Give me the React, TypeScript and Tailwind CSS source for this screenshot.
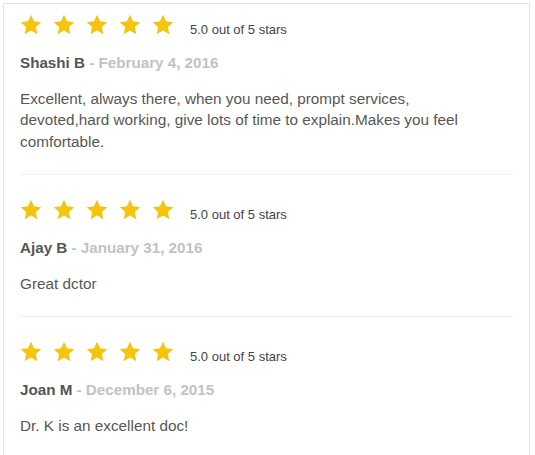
import React from "react";

const reviews = [
  {
    name: "Shashi B",
    date: "February 4, 2016",
    text: "Excellent, always there, when you need, prompt services, devoted,hard working, give lots of time to explain.Makes you feel comfortable.",
  },
  { name: "Ajay B", date: "January 31, 2016", text: "Great dctor" },
  { name: "Joan M", date: "December 6, 2015", text: "Dr. K is an excellent doc!" },
];

function Star() {
  return (
    <svg width="22" height="22" viewBox="0 0 24 24" className="block">
      <polygon
        points="12,0.8 15.3,8 23.2,8.9 17.3,14.2 18.9,22 12,18.1 5.1,22 6.7,14.2 0.8,8.9 8.7,8"
        fill="#f4c40f"
      />
    </svg>
  );
}

export default function App() {
  return (
    <div className="bg-white w-[535px] h-[455px] overflow-hidden" style={{ fontFamily: '"Liberation Sans", Arial, sans-serif' }}>
      <div className="ml-[3px] mt-[3px] w-[527px] h-[460px] border-l border-t border-r border-[#e4e4e4] px-4">
        {reviews.map((r, i) => (
          <div
            key={i}
            className={`flex flex-col border-b border-[#eeeeee] pb-[22px] ${i === 0 ? "pt-[10px]" : "pt-[24px]"}`}
          >
            <div className="flex items-end h-[22px]">
              <div className="flex gap-[11px]">
                <Star />
                <Star />
                <Star />
                <Star />
                <Star />
              </div>
              <span className="ml-[16px] text-[13px] leading-[15px] mb-[-1px] text-[#444444]">5.0 out of 5 stars</span>
            </div>
            <div className="mt-[16.5px] text-[15.2px] leading-[20px] font-bold">
              <span className="text-[#555555]">{r.name}</span>
              <span className="text-[#c2c2c2]"> - {r.date}</span>
            </div>
            <p className="mt-[15px] text-[15.3px] leading-[21.5px] text-[#575757] pr-[30px]">{r.text}</p>
          </div>
        ))}
      </div>
    </div>
  );
}
